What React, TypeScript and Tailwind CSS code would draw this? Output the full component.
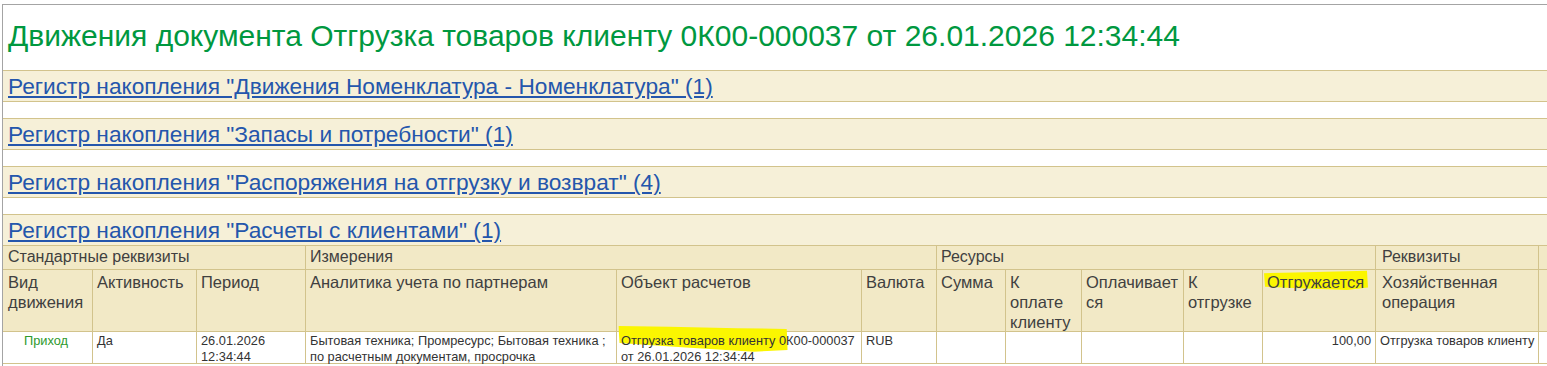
import React from "react";

const registers = [
  'Регистр накопления "Движения Номенклатура - Номенклатура" (1)',
  'Регистр накопления "Запасы и потребности" (1)',
  'Регистр накопления "Распоряжения на отгрузку и возврат" (4)',
  'Регистр накопления "Расчеты с клиентами" (1)',
];

const group = "bg-[#f2e9c6] border-r border-b border-[#d2c38c] text-[16px] leading-[20px] text-[#404040] whitespace-nowrap h-[24px] pt-[1px]";
const head = "bg-[#f2e9c6] border-r border-b border-[#d2c38c] text-[16.5px] leading-[20px] text-[#404040] whitespace-nowrap h-[62px] pt-[2px]";
const cellBase = "bg-white border-r border-b border-[#d2c38c] text-[12.8px] leading-[16px] whitespace-nowrap h-[32px] pt-[1px]";
const cell = cellBase + " text-[#333]";

function Marker({ className }: { className: string }) {
  // hand-drawn yellow marker stroke lying under the text
  return (
    <svg className={"absolute pointer-events-none " + className} viewBox="0 0 100 30" preserveAspectRatio="none">
      <path d="M0 4 L30 3 L70 2 L99 1 L100 22 L80 25 L40 23 L1 21 Z" fill="#fbf600" />
    </svg>
  );
}

export default function App() {
  return (
    <div className="h-screen bg-white pt-[4px] pl-[2px] font-['Liberation_Sans',Arial,sans-serif]">
      <div className="h-full border-t border-l border-[#a4a4a4]">
        {/* Заголовок */}
        <div className="h-[65px] pt-[15px] pl-[5px]">
          <h1 className="text-[30px] leading-[32px] text-[#00983f] whitespace-nowrap">
            Движения документа Отгрузка товаров клиенту 0К00-000037 от 26.01.2026 12:34:44
          </h1>
        </div>

        {/* Регистры */}
        {registers.map((r, i) => (
          <div
            key={r}
            className={
              "h-[32px] flex items-center pl-[5px] bg-[#f6f0d8] border-y border-[#d2c38c] " +
              (i < 3 ? "mb-[16px]" : "")
            }
          >
            <a href="#" className="text-[22.7px] leading-[26px] text-[#2456ac] underline underline-offset-2 whitespace-nowrap">
              {r}
            </a>
          </div>
        ))}

        {/* Таблица движений */}
        <div className="grid grid-cols-[90px_104px_109px_311px_245px_75px_69px_76px_102px_79px_113px_163px_1fr]">
          <div className={group + " col-span-3 pl-[5px]"}>Стандартные реквизиты</div>
          <div className={group + " col-span-3 pl-[4px]"}>Измерения</div>
          <div className={group + " col-span-5 pl-[4px]"}>Ресурсы</div>
          <div className={group + " pl-[6px]"}>Реквизиты</div>
          <div className={group + " border-r-0"} />

          <div className={head + " pl-[5px]"}>Вид<br />движения</div>
          <div className={head + " pl-[4px]"}>Активность</div>
          <div className={head + " pl-[4px]"}>Период</div>
          <div className={head + " pl-[4px]"}>Аналитика учета по партнерам</div>
          <div className={head + " pl-[4px]"}>Объект расчетов</div>
          <div className={head + " pl-[4px]"}>Валюта</div>
          <div className={head + " pl-[4px]"}>Сумма</div>
          <div className={head + " pl-[4px]"}>К<br />оплате<br />клиенту</div>
          <div className={head + " pl-[4px]"}>Оплачивает<br />ся</div>
          <div className={head + " pl-[4px]"}>К<br />отгрузке</div>
          <div className={head + " pl-[4px] relative"}>
            <Marker className="left-[1px] top-[0px] w-[104px] h-[24px]" />
            <span className="relative">Отгружается</span>
          </div>
          <div className={head + " pl-[6px]"}>Хозяйственная<br />операция</div>
          <div className={head + " border-r-0"} />

          <div className={cellBase + " pl-[21px] text-[#2e9a2e]"}>Приход</div>
          <div className={cell + " pl-[4px]"}>Да</div>
          <div className={cell + " pl-[4px]"}>26.01.2026<br />12:34:44</div>
          <div className={cell + " pl-[4px]"}>
            Бытовая техника; Промресурс; Бытовая техника ;<br />по расчетным документам, просрочка
          </div>
          <div className={cell + " pl-[4px] relative"}>
            <Marker className="left-[1px] top-[-7px] w-[170px] h-[30px] rotate-[2deg]" />
            <span className="relative">
              Отгрузка товаров клиенту 0К00-000037<br />от 26.01.2026 12:34:44
            </span>
          </div>
          <div className={cell + " pl-[4px]"}>RUB</div>
          <div className={cell} />
          <div className={cell} />
          <div className={cell} />
          <div className={cell} />
          <div className={cell + " pr-[4px] text-right"}>100,00</div>
          <div className={cell + " pl-[4px]"}>Отгрузка товаров клиенту</div>
          <div className={cell + " border-r-0"} />
        </div>
      </div>
    </div>
  );
}
